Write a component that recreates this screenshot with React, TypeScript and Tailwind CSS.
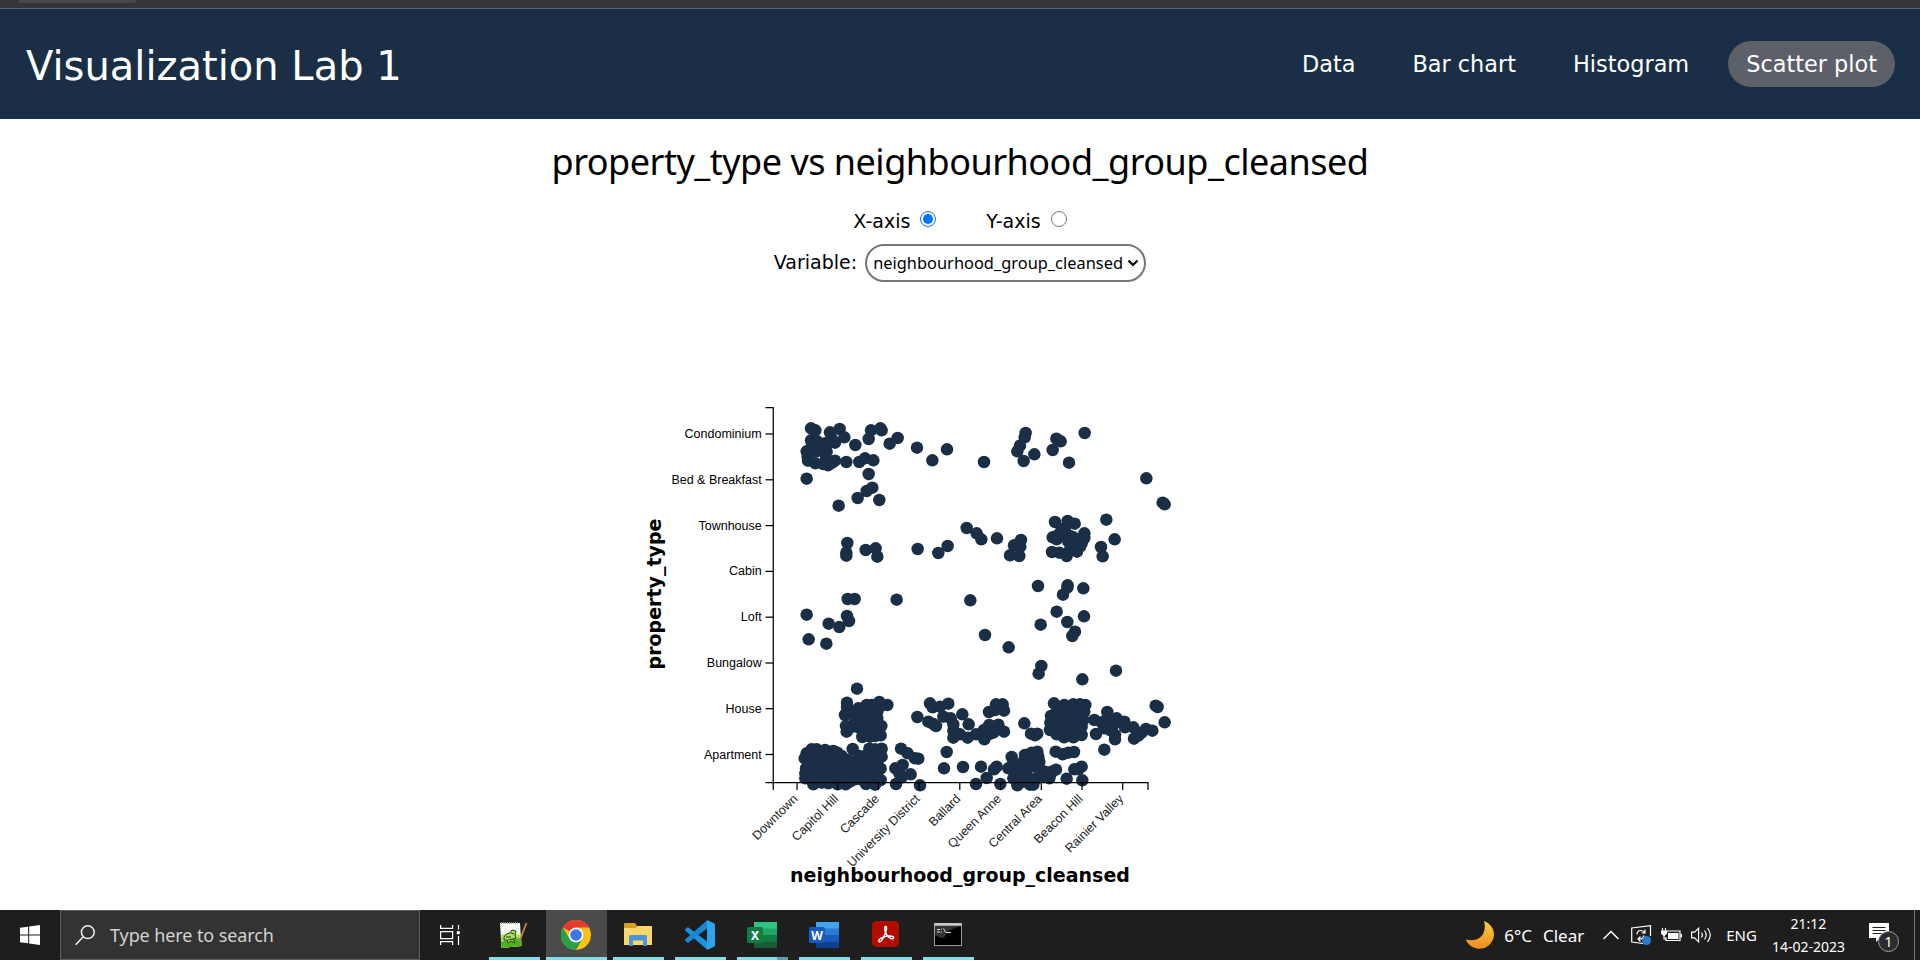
import type { ReactNode } from "react";

const NAVY = "#1a2f46";

const xTicks: [number, string][] = [
  [24, "Downtown"],
  [64.7, "Capitol Hill"],
  [105.4, "Cascade"],
  [146.1, "University District"],
  [186.8, "Ballard"],
  [227.6, "Queen Anne"],
  [268.3, "Central Area"],
  [309, "Beacon Hill"],
  [349.7, "Rainier Valley"],
];

const yTicks: [number, string][] = [
  [26.5, "Condominium"],
  [72.3, "Bed & Breakfast"],
  [118.1, "Townhouse"],
  [163.9, "Cabin"],
  [209.7, "Loft"],
  [255.5, "Bungalow"],
  [301.2, "House"],
  [347, "Apartment"],
];

function block(x0: number, x1: number, y0: number, y1: number) {
  const out: [number, number][] = [];
  for (let x = x0; x <= x1; x += 18) for (let y = y0; y <= y1; y += 16) out.push([x, y]);
  return out;
}

// Jittered listings. Each cluster has its own origin in plot units; points are in thirds of a unit.
const clusters: { x: number; y: number; points: [number, number][] }[] = [
  {
    x: -143,
    y: -17.5,
    points: [
      [543, 115], [556, 121], [600, 127], [629, 117], [543, 151], [560, 153], [605, 145], [643, 142], [615, 158], [585, 160],
      [676, 165], [723, 121], [751, 115], [755, 121], [716, 147], [779, 161], [803, 144], [530, 184], [533, 200], [534, 212],
      [556, 220], [590, 185], [588, 205], [580, 222], [594, 226], [607, 218], [615, 212], [649, 216], [688, 216], [705, 205],
      [730, 211], [545, 170], [565, 175], [560, 184], [590, 165],
      [530, 266], [716, 252], [727, 293], [710, 303], [683, 324], [748, 330], [626, 347],
      [652, 459], [649, 488], [649, 497], [707, 480], [737, 475], [742, 500],
    ],
  },
  {
    x: 127,
    y: -7.5,
    points: [
      [51, 143], [97, 181], [141, 148], [252, 186], [377, 99], [374, 112], [360, 137], [352, 154], [371, 183], [403, 163],
      [469, 116], [482, 124], [458, 150], [554, 99], [507, 188], [739, 235], [788, 308], [794, 313],
      [53, 447], [115, 459], [143, 438], [200, 384], [230, 400], [244, 418], [291, 415], [363, 420], [342, 436], [361, 440],
      [330, 466], [358, 468], [465, 366], [503, 363], [524, 371], [485, 388], [458, 412], [475, 405], [470, 418], [490, 400],
      [510, 408], [553, 400], [553, 414], [520, 412], [535, 420], [545, 430], [540, 440], [456, 456], [478, 458], [500, 468],
      [510, 450], [531, 455], [515, 435], [495, 385], [505, 425], [619, 359], [644, 418], [603, 441], [608, 469],
    ],
  },
  {
    x: -143,
    y: 162.5,
    points: [
      [653, 87], [674, 87], [800, 89], [530, 134], [596, 161], [628, 171], [651, 138], [657, 153], [536, 208], [589, 221], [681, 356],
    ],
  },
  {
    x: 127,
    y: 162.5,
    points: [
      [414, 48], [503, 46], [502, 53], [489, 74], [550, 55], [211, 91], [470, 125], [502, 156], [552, 139], [422, 164],
      [255, 195], [326, 232], [525, 185], [517, 198], [424, 288], [416, 311], [648, 302], [547, 328],
      [767, 407], [773, 411], [794, 457], [757, 482], [738, 477], [725, 488], [715, 497],
    ],
  },
  {
    x: 7,
    y: 282.5,
    points: [
      [201, 38], [201, 52], [195, 75], [198, 108], [200, 125], [322, 45], [298, 36], [260, 45], [235, 55], [275, 45],
      [300, 50], [292, 65], [250, 65], [225, 75], [270, 75], [292, 85], [225, 95], [248, 95], [275, 100], [304, 108],
      [218, 110], [240, 115], [265, 120], [290, 125], [302, 136], [247, 141], [270, 140], [285, 138],
      [450, 40], [458, 52], [480, 50], [505, 41], [412, 81], [445, 95], [460, 102], [468, 108], [490, 80], [512, 85],
      [547, 73], [520, 103], [566, 103], [520, 122], [520, 143], [540, 133], [563, 143], [588, 133], [613, 148],
      [628, 105], [655, 104], [672, 125], [640, 112], [612, 120], [640, 128], [628, 132], [608, 135],
      [648, 43], [668, 43], [672, 62], [645, 60], [627, 66], [660, 55],
      [733, 100], [753, 131], [765, 136], [772, 131],
      [822, 40], [853, 45], [880, 43], [916, 45], [900, 43], [813, 78], [811, 98], [810, 120], [828, 68],
      [913, 65], [910, 90], [905, 110], [905, 135], [830, 133], [852, 142], [880, 142],
      [840, 60], [865, 60], [890, 65], [840, 85], [865, 85], [888, 88], [835, 105], [860, 110], [885, 112], [860, 128],
      [885, 128], [898, 130], [832, 120],
      [943, 90], [982, 66], [982, 85], [965, 97], [972, 115], [948, 132], [1010, 85], [1033, 95], [1000, 105],
      [990, 120], [1005, 135], [1005, 148], [1035, 112], [1060, 112], [1062, 146],
    ],
  },
  {
    x: 7,
    y: 282.5,
    points: [
      [95, 178], [80, 190], [74, 205], [110, 178], [135, 180], [160, 183], [172, 188], [185, 198], [78, 235], [76, 250],
      [76, 265], [100, 283], [125, 278], [145, 280], [173, 283], [197, 283], [210, 275], [205, 210],
      ...block(92, 172, 204, 268), ...block(190, 226, 220, 268),
      [218, 177], [268, 176], [305, 176], [285, 178], [305, 200], [302, 236], [302, 270], [258, 282], [285, 284], [248, 270],
      ...block(238, 296, 198, 264),
      [363, 176], [383, 190], [405, 205], [415, 206], [346, 235], [368, 225], [392, 253], [358, 250], [365, 262],
      [348, 282], [420, 286], [500, 186], [492, 235], [549, 231], [603, 230], [588, 282], [620, 264], [642, 238],
      [650, 230], [661, 282],
      [695, 201], [735, 195], [755, 188], [772, 185], [775, 200], [778, 215], [685, 235], [700, 220], [705, 250],
      [700, 265], [712, 286], [730, 275], [750, 284], [760, 284], [770, 265], [730, 215], [750, 210], [725, 235],
      [750, 230], [765, 230], [720, 255], [740, 255], [776, 228], [808, 265], [795, 245], [815, 245], [828, 239],
      [790, 258], [812, 252],
      [827, 185], [848, 193], [865, 188], [882, 186], [860, 266], [883, 238], [905, 230], [895, 238], [907, 271], [973, 179],
    ],
  },
];

function ScatterPlot() {
  return (
    <svg className="block" width="600" height="530" viewBox="-150 -24.5 600 530">
      <g fill={NAVY}>
        {clusters.map((c, i) =>
          c.points.map(([x, y], j) => <circle key={`${i}-${j}`} cx={c.x + x / 3} cy={c.y + y / 3} r={6.25} />),
        )}
      </g>
      <g stroke="#000" strokeWidth="1.25" fill="none">
        <path d="M-7.5 0H0.25V375H-7.5" />
        <path d="M0.25 382.5V375H375V382.5" />
        {yTicks.map(([y]) => <path key={y} d={`M-7.5 ${y}H0`} />)}
        {xTicks.map(([x]) => <path key={x} d={`M${x} 375V382.5`} />)}
      </g>
      <g className="font-['Liberation_Sans',sans-serif] text-[12.5px]">
        {yTicks.map(([y, t]) => (
          <text key={t} x={-11.3} y={y + 4} textAnchor="end">{t}</text>
        ))}
        {xTicks.map(([x, t]) => (
          <text key={t} transform={`translate(${x} 375) rotate(-45)`} x={-11} y={13} textAnchor="end" fill="#222">{t}</text>
        ))}
      </g>
      <g className="font-['DejaVu_Sans',sans-serif] text-[19px] font-bold">
        <text x={187} y={474} textAnchor="middle">neighbourhood_group_cleansed</text>
        <text transform="translate(-112 186.5) rotate(-90)" textAnchor="middle">property_type</text>
      </g>
    </svg>
  );
}

function NotepadIcon() {
  return (
    <svg width="30" height="30" viewBox="0 0 30 30">
      <path d="M1 3h20l1.500 23-20 2z" fill="#f4f8ee" />
      <path d="M1.800 15q10-3 20 0l.7 11-20 2z" fill="#a9dc6a" />
      <path d="M2 22q10-3 20-4l.5 8-20 2z" fill="#4fb01c" />
      <path d="M2 3h18" stroke="#999" strokeWidth="2" strokeDasharray="1 1" />
      <path d="M5 17q2-4 6-4l2-3 4 1-1 4 1 3-3 1 2 4-4-2-3 2-1-3-3 0z" fill="#a6e05a" stroke="#24431a" strokeWidth="1" />
      <path d="M7 17h5M12 13l3 1M9 20l5-1" stroke="#24431a" />
      <path d="M27.500 3L22 17l-1.500 4" stroke="#c98b2c" strokeWidth="1.800" fill="none" />
    </svg>
  );
}

function ChromeIcon() {
  return (
    <svg width="30" height="30" viewBox="0 0 30 30">
      <circle cx="15" cy="15" r="15" fill="#fbc116" />
      <path d="M15 15L2 7.500A15 15 0 0 1 28 7.500H15z" fill="#e33b2e" />
      <path d="M2 7.500A15 15 0 0 0 15 30L21.500 18.800 15 15 8.500 18.800z" fill="#2b9f48" />
      <circle cx="15" cy="15" r="7.400" fill="#fff" />
      <circle cx="15" cy="15" r="5.800" fill="#3b78e7" />
    </svg>
  );
}

function FolderIcon() {
  return (
    <svg width="30" height="30" viewBox="0 0 30 30">
      <path d="M1 4q0-1 1-1h10l2 3h14q1 0 1 1v4H1z" fill="#d9a01f" />
      <path d="M1 8h12l2-2h13q1 0 1 1v18H1z" fill="#fbd668" />
      <path d="M6 26V16.500q0-1.500 1.500-1.500h15q1.500 0 1.500 1.500V26h-4v-5.500H10V26z" fill="#4a94d8" />
    </svg>
  );
}

function CodeIcon() {
  return (
    <svg width="30" height="30" viewBox="0 0 30 30">
      <path d="M22.500 30L22 21.500 3.500 7.500q-.8-.5-1.400 0L.4 9.200q-.7.8 0 1.600z" fill="#1b94e0" />
      <path d="M22.500 0L22 8.500 3.500 22.500q-.8.500-1.400 0L.4 20.800q-.7-.8 0-1.600z" fill="#1787d0" />
      <path d="M22 0l7 3.200q1 .5 1 1.600v20.400q0 1.100-1 1.600L22 30z" fill="#2ba3ee" />
    </svg>
  );
}

function OfficeIcon({ letter, c }: { letter: string; c: string[] }) {
  return (
    <svg width="30" height="30" viewBox="0 0 30 30">
      <rect x="7" y="2" width="23" height="26" rx="1.500" fill={c[1]} />
      <path d="M7 2h23v6.500H7z" fill={c[0]} />
      <path d="M7 15h23v6.500H7z" fill={c[2]} />
      <path d="M7 21.500h23V28H7z" fill={c[3]} />
      <rect x="0" y="7" width="16" height="16" rx="1.500" fill={c[4]} />
      <text x="8" y="19.500" textAnchor="middle" fill="#fff" className="font-['Noto_Sans',sans-serif] text-[12px] font-bold">{letter}</text>
    </svg>
  );
}

function AcrobatIcon() {
  return (
    <svg width="30" height="30" viewBox="0 0 30 30">
      <rect x="1" y="1" width="27" height="26" rx="4.500" fill="#b30b00" />
      <path d="M8 21.500c-1.500-2 4-5 9-5.500 5-.4 6.500 1.200 5 2.500-2 1.300-6-2-7.500-6-1.200-3.500-1-6 .2-6 1.500 0 .8 5-1.700 10-1.700 3.500-3.800 6.500-5 5z" fill="none" stroke="#fff" strokeWidth="1.500" />
    </svg>
  );
}

function TerminalIcon() {
  return (
    <svg width="30" height="30" viewBox="0 0 30 30">
      <rect x="1.500" y="3.500" width="27" height="22" fill="#000" stroke="#9a9a9a" />
      <path d="M1.500 4.500h27" stroke="#cfcfcf" strokeWidth="2.500" />
      <path d="M2 6h26q-14 3-17 12-5 0-9-3z" fill="#333" />
      <path d="M4 9.500h3M4 12h3M8.500 8.500v1M8.500 11.500v1M10.500 8.500l2 4M13 12.500h5" stroke="#ddd" />
    </svg>
  );
}

function NavLink({ active, children }: { active?: boolean; children: ReactNode }) {
  return <a className={active ? "rounded-[23px] bg-[#5b6069] px-[18px]" : "rounded-[23px] px-[18px]"}>{children}</a>;
}

function TaskButton({ active, children, stacked }: { active?: boolean; stacked?: boolean; children: ReactNode }) {
  return (
    <div className={active ? "flex w-[61px] flex-col items-center bg-[#4b4b4b]" : "flex w-[51px] flex-col items-center"}>
      <div className="mr-px flex h-[47px] items-center pt-[3px]">{children}</div>
      <div className="flex h-[3px] w-full bg-[#82dfe7]">{stacked && <div className="ml-auto w-[11px] bg-[#5c9fa5]" />}</div>
    </div>
  );
}

export default function App() {
  return (
    <div className="flex h-[960px] w-[1920px] flex-col overflow-hidden bg-white text-black">
      <div className="h-[9px] shrink-0 border-b border-[#54637a] bg-[#35363a] pl-[18px]">
        <div className="h-[3px] w-[118px] rounded-b-md bg-[#47474d]" />
      </div>
      <header className="flex h-[110px] shrink-0 items-center justify-between bg-[#1a2f46] pr-[25px] pl-[26px] font-['DejaVu_Sans',sans-serif] text-white">
        <h1 className="pt-1 text-[40px] leading-[48px]">Visualization Lab 1</h1>
        <nav className="flex items-center gap-[21px] text-[22.4px] leading-[46px]">
          <NavLink>Data</NavLink>
          <NavLink>Bar chart</NavLink>
          <NavLink>Histogram</NavLink>
          <NavLink active>Scatter plot</NavLink>
        </nav>
      </header>
      <main className="flex h-[791px] shrink-0 flex-col items-center">
        <h2 className="mt-[18px] font-['Noto_Sans',sans-serif] text-[36px] leading-[50px] tracking-[-0.5px]">property_type vs neighbourhood_group_cleansed</h2>
        <div className="mt-[20px] flex h-[28px] items-center gap-[50px] font-['DejaVu_Sans',sans-serif] text-[19px]">
          <label className="flex items-center gap-[10px]"><span>X-axis</span>
            <span className="mb-1 flex size-4 items-center justify-center rounded-full border-[1.5px] border-[#0075ff]"><span className="size-[10px] rounded-full bg-[#0075ff]" /></span>
          </label>
          <label className="flex items-center gap-[10px]"><span>Y-axis</span>
            <span className="mb-1 size-4 rounded-full border border-[#767676]" />
          </label>
        </div>
        <div className="mt-[9px] flex h-[38px] items-center gap-[8px] font-['DejaVu_Sans',sans-serif] text-[19px]">
          <span className="pb-[2px]">Variable:</span>
          <div className="flex h-[38px] w-[281px] items-center justify-between rounded-[19px] border-2 border-[#767676] pr-[5px] pl-[6px] font-['Noto_Sans',sans-serif] text-[16.4px]">
            <span>neighbourhood_group_cleansed</span>
            <svg width="12" height="8" viewBox="0 0 12 8"><path d="M1.500 1.500L6 6l4.500-4.500" fill="none" stroke="#000" strokeWidth="2.200" /></svg>
          </div>
        </div>
        <div className="mt-[101px] mr-[75px]"><ScatterPlot /></div>
      </main>
      <footer className="z-10 flex h-[50px] shrink-0 bg-[#1e1e1e] font-['Noto_Sans',sans-serif] text-white">
        <div className="flex w-[60px] items-center justify-center">
          <svg width="20" height="20" viewBox="0 0 20 20"><path d="M0 2.800L8.200 1.700v7.800H0zM9.200 1.500L20 0v9.500H9.200zM0 10.500h8.200v7.800L0 17.200zM9.200 10.500H20V20L9.200 18.500z" fill="#fff" /></svg>
        </div>
        <div className="flex w-[360px] items-center border border-[#5f5f5f] bg-[#333] pl-[14px]">
          <svg width="20" height="21" viewBox="0 0 20 21"><circle cx="12.800" cy="7.200" r="6.400" fill="none" stroke="#eee" strokeWidth="1.500" /><path d="M8.200 11.800L.7 19.800" stroke="#eee" strokeWidth="1.500" /></svg>
          <span className="ml-[15px] text-[18px] tracking-[-0.1px] text-[#d2d2d2]">Type here to search</span>
        </div>
        <svg className="mt-[15px] ml-[20px]" width="20" height="20" viewBox="0 0 20 20" fill="none" stroke="#fff" strokeWidth="1.200">
          <path d="M.6 0v3.400h12V0M.6 20v-3.400h12V20M.6 6.600h12v7H.6zM18.500 0v4.500M18.500 11v9" /><path d="M16.800 6.200h3v3h-3z" fill="#fff" stroke="none" />
        </svg>
        <div className="ml-[29px] flex">
          <TaskButton><NotepadIcon /></TaskButton>
          <div className="ml-[6px] flex gap-[6px]">
            <TaskButton active><ChromeIcon /></TaskButton>
            <TaskButton><FolderIcon /></TaskButton>
          </div>
          <div className="ml-[11px] flex gap-[11px]">
            <TaskButton><CodeIcon /></TaskButton>
            <TaskButton stacked><OfficeIcon letter="X" c={["#32c481", "#21a366", "#107c41", "#185c37", "#107c41"]} /></TaskButton>
            <TaskButton><OfficeIcon letter="W" c={["#41a5ee", "#2b7cd3", "#185abd", "#103f91", "#185abd"]} /></TaskButton>
            <TaskButton><AcrobatIcon /></TaskButton>
            <TaskButton><TerminalIcon /></TaskButton>
          </div>
        </div>
        <div className="ml-auto flex h-[50px] items-center text-[17px]">
          <svg width="28" height="28" viewBox="0 0 28 28">
            <defs>
              <linearGradient id="moon" x1="0" y1="0" x2="0" y2="1"><stop offset="0" stopColor="#fbcf3c" /><stop offset="1" stopColor="#ef8a24" /></linearGradient>
            </defs>
            <path d="M18 0C26 3 30 11 27 18.500 23.500 27 14 30 6.500 26 3 24 1 21.500 0 18.500 8 20.500 15 18 17.500 12 19.200 8 19.200 4 18 0z" fill="url(#moon)" />
          </svg>
          <span className="ml-[10px] pt-[2px]">6°C</span>
          <span className="ml-[11px] pt-[2px]">Clear</span>
          <svg className="ml-[19px]" width="16" height="10" viewBox="0 0 16 10"><path d="M.5 9L8 1.500 15.500 9" fill="none" stroke="#fff" strokeWidth="1.500" /></svg>
          <svg className="ml-[12px]" width="21" height="21" viewBox="0 0 21 21" fill="none" stroke="#fff" strokeWidth="1.200"><path d="M12 18.500L.7 17V3L19.500.7V11M6 9.500q0-4 4-4 2.500 0 3.500 2.200M14 4.500v3.500h-3.500M13 10.500q-1 3.500-4 3.500H7.500M9.500 16.500L7 14l2.500-2.500" /><circle cx="15.500" cy="15.500" r="4.500" fill="#2e7bd0" stroke="none" /></svg>
          <svg className="ml-[9px]" width="21" height="14" viewBox="0 0 21 14" fill="none" stroke="#fff" strokeWidth="1.200"><path d="M6 3h13v9.500H5V9" /><path d="M7 5h10.500v6H7zM19.500 6h1.500v3.500h-1.500z" fill="#fff" stroke="none" /><path d="M1.500 0v2.500M4.500 0v2.500M3 7.500V11h2" /><path d="M.5 3h5v2.500L3 7.500.5 5.500z" fill="#fff" /></svg>
          <svg className="ml-[9px]" width="21" height="18" viewBox="0 0 21 18" fill="none" stroke="#fff" strokeWidth="1.200"><path d="M.6 6.200h3l4-4v13.600l-4-4h-3zM10.500 6.500q1.800 2.500 0 5M13.500 4.500q3.400 4.500 0 9M16.500 2q5.500 7 0 14" /></svg>
          <span className="ml-[14px] text-[15px]">ENG</span>
          <div className="ml-[15px] flex flex-col items-center gap-[3px] text-[14px] leading-[20px]"><span>21:12</span><span>14-02-2023</span></div>
          <div className="relative ml-[24px] h-[30px] w-[30px]">
            <svg className="mt-[3px]" width="20" height="20" viewBox="0 0 20 20"><path d="M0 0h20v15h-9l-4 4v-4H0z" fill="#fff" /><path d="M3.500 4.500h13M3.500 7.500h13M3.500 10.500h9" stroke="#1e1e1e" strokeWidth="1.200" /></svg>
            <span className="absolute top-[11px] left-[9px] flex size-[21px] items-center justify-center rounded-full border border-[#999] bg-[#2c2c2c] text-[14px]">1</span>
          </div>
          <div className="mr-[5px] ml-[15px] h-[50px] w-px bg-[#777]" />
        </div>
      </footer>
    </div>
  );
}
